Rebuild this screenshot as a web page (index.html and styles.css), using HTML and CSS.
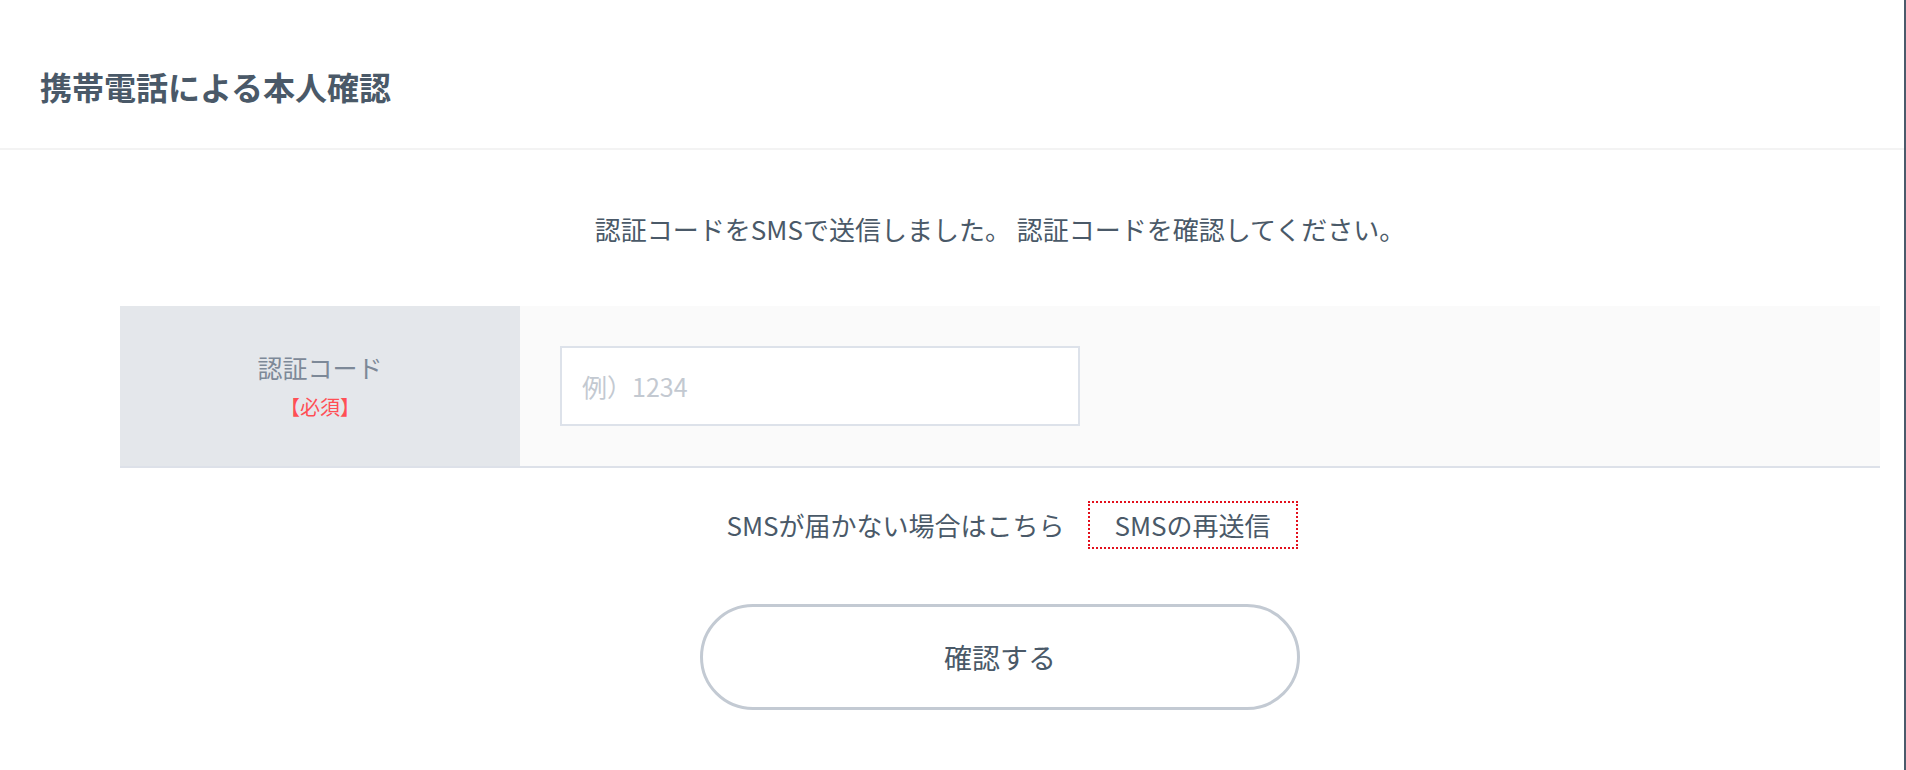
FILE: index.html
```html
<!DOCTYPE html>
<html lang="ja">
<head>
<meta charset="utf-8">
<title>携帯電話による本人確認</title>
<link rel="stylesheet" href="styles.css">
</head>
<body>
<div class="page">
  <main class="main">
    <header class="header">
      <h1 class="title">携帯電話による本人確認</h1>
    </header>
    <section class="content">
      <p class="lead">認証コードをSMSで送信しました。 認証コードを確認してください。</p>
      <div class="form-row">
        <div class="label-cell">
          <div class="label">認証コード</div>
          <div class="required">【必須】</div>
        </div>
        <div class="field-cell">
          <input class="code-input" type="text" placeholder="例）1234">
        </div>
      </div>
      <div class="resend-row">
        <span class="resend-text">SMSが届かない場合はこちら</span>
        <a class="resend-link" href="#">SMSの再送信</a>
      </div>
      <div class="actions">
        <button class="confirm-btn" type="button">確認する</button>
      </div>
    </section>
  </main>
  <div class="edge"></div>
</div>
</body>
</html>
```

FILE: styles.css
```css
* { box-sizing: border-box; }

html, body {
  margin: 0;
  padding: 0;
  background: #ffffff;
}

body {
  font-family: "Noto Sans CJK JP", "Noto Sans", sans-serif;
  color: #4a5968;
}

.page {
  display: flex;
  min-height: 770px;
}

.main {
  flex: 1;
  min-width: 0;
}

.edge {
  width: 2px;
  background: #4b5a6b;
}

.header {
  height: 150px;
  padding: 70px 0 0 40px;
  border-bottom: 2px solid #f3f3f3;
}

.title {
  margin: 0;
  font-size: 32px;
  line-height: 1;
  font-weight: 700;
  color: #4a5968;
}

.content {
  padding: 0 24px 0 120px;
}

.lead {
  margin: 66px 0 0;
  text-align: center;
  font-size: 26px;
  line-height: 1;
}

.form-row {
  margin-top: 64px;
  display: grid;
  grid-template-columns: 400px 1fr;
  height: 162px;
  border-bottom: 2px solid #dde1e9;
}

.label-cell {
  background: #e4e7eb;
  display: flex;
  flex-direction: column;
  align-items: center;
  justify-content: center;
  gap: 17px;
}

.label {
  font-size: 25px;
  line-height: 1;
  color: #7d8998;
}

.required {
  font-size: 20px;
  line-height: 1;
  color: #ff4f55;
}

.field-cell {
  background: #fafafa;
  display: flex;
  align-items: center;
  padding-left: 40px;
}

.code-input {
  width: 520px;
  height: 80px;
  border: 2px solid #dde2ea;
  background: #ffffff;
  padding: 0 20px;
  font-family: "Noto Sans CJK JP", "Noto Sans", sans-serif;
  font-size: 25px;
  color: #4a5968;
  outline: none;
}

.code-input::placeholder {
  color: #c3c9d1;
}

.resend-row {
  margin-top: 33px;
  display: flex;
  justify-content: center;
  align-items: center;
  gap: 23px;
  padding-left: 24px;
}

.resend-text {
  font-size: 26px;
  line-height: 1;
}

.resend-link {
  display: inline-flex;
  align-items: center;
  height: 48px;
  padding: 0 25px;
  border: 2px dotted #e3101c;
  font-size: 26px;
  line-height: 1;
  color: #4a5968;
  text-decoration: none;
}

.actions {
  margin-top: 55px;
  display: flex;
  justify-content: center;
}

.confirm-btn {
  width: 600px;
  height: 106px;
  border: 3px solid #c3cad3;
  border-radius: 53px;
  background: #ffffff;
  font-family: "Noto Sans CJK JP", "Noto Sans", sans-serif;
  font-size: 28px;
  font-weight: 400;
  color: #4a5968;
  cursor: pointer;
}
```
